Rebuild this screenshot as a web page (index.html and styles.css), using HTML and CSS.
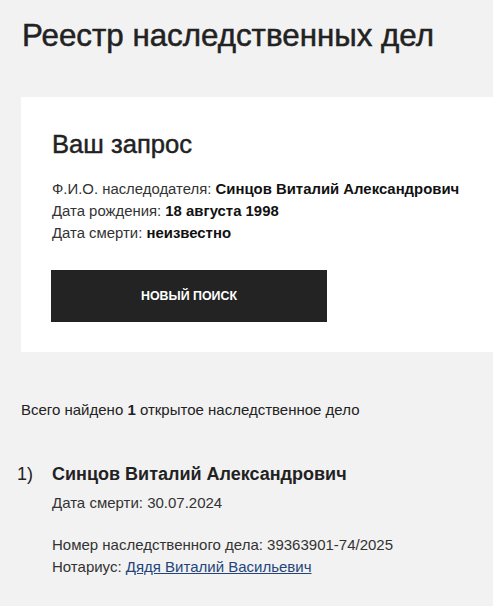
FILE: index.html
```html
<!DOCTYPE html>
<html lang="ru">
<head>
<meta charset="utf-8">
<title>Реестр наследственных дел</title>
<link rel="stylesheet" href="styles.css">
</head>
<body>
<main class="page">
  <h1 class="title">Реестр наследственных дел</h1>
  <section class="card">
    <h2 class="card-title">Ваш запрос</h2>
    <div class="info">
      <div>Ф.И.О. наследодателя: <b>Синцов Виталий Александрович</b></div>
      <div>Дата рождения: <b>18 августа 1998</b></div>
      <div>Дата смерти: <b>неизвестно</b></div>
    </div>
    <button class="btn" type="button">НОВЫЙ ПОИСК</button>
  </section>
  <p class="summary">Всего найдено <b>1</b> открытое наследственное дело</p>
  <ol class="results">
    <li class="result">
      <span class="num">1)</span>
      <div class="result-body">
        <div class="result-name">Синцов Виталий Александрович</div>
        <div class="result-line">Дата смерти: 30.07.2024</div>
        <div class="result-meta">
          <div>Номер наследственного дела: 39363901-74/2025</div>
          <div>Нотариус: <a href="#" class="link">Дядя Виталий Васильевич</a></div>
        </div>
      </div>
    </li>
  </ol>
</main>
</body>
</html>
```
FILE: styles.css
```css
html, body {
  margin: 0;
  padding: 0;
}
body {
  background: #f2f2f2;
  color: #222;
  font-family: "Liberation Sans", Arial, sans-serif;
}
.page {
  display: flex;
  flex-direction: column;
  padding-top: 18px;
}
.title {
  margin: 0 0 43px 22px;
  font-size: 31.3px;
  line-height: 36px;
  font-weight: normal;
  color: #222;
  -webkit-text-stroke: 0.5px #222;
}
.card {
  margin-left: 21px;
  background: #fff;
  padding: 32px 0 30px 30px;
  display: flex;
  flex-direction: column;
  align-items: flex-start;
}
.card-title {
  margin: 0 0 19px 1px;
  font-size: 25.6px;
  line-height: 30px;
  font-weight: normal;
  color: #222;
  -webkit-text-stroke: 0.45px #222;
}
.info {
  margin-left: 1px;
  font-size: 14.9px;
  line-height: 22px;
  color: #333;
}
.info b {
  color: #111;
}
.btn {
  margin-top: 26px;
  width: 276px;
  height: 52px;
  border: 0;
  background: #232323;
  color: #fff;
  font-family: "Liberation Sans", Arial, sans-serif;
  font-weight: bold;
  font-size: 12.4px;
  padding: 0;
}
.summary {
  margin: 48px 0 0 21px;
  font-size: 15px;
  line-height: 20px;
  color: #222;
}
.results {
  list-style: none;
  margin: 42px 0 0 0;
  padding: 0;
}
.result {
  display: flex;
}
.num {
  flex: none;
  width: 52px;
  padding-left: 17px;
  box-sizing: border-box;
  font-size: 18px;
  line-height: 24px;
}
.result-name {
  font-size: 18px;
  line-height: 24px;
  font-weight: bold;
  color: #222;
}
.result-line {
  margin-top: 6px;
  font-size: 15px;
  line-height: 22px;
  color: #333;
}
.result-meta {
  margin-top: 20px;
  font-size: 15px;
  line-height: 22px;
  color: #333;
}
.link {
  color: #24457a;
  text-decoration: underline;
}
```
